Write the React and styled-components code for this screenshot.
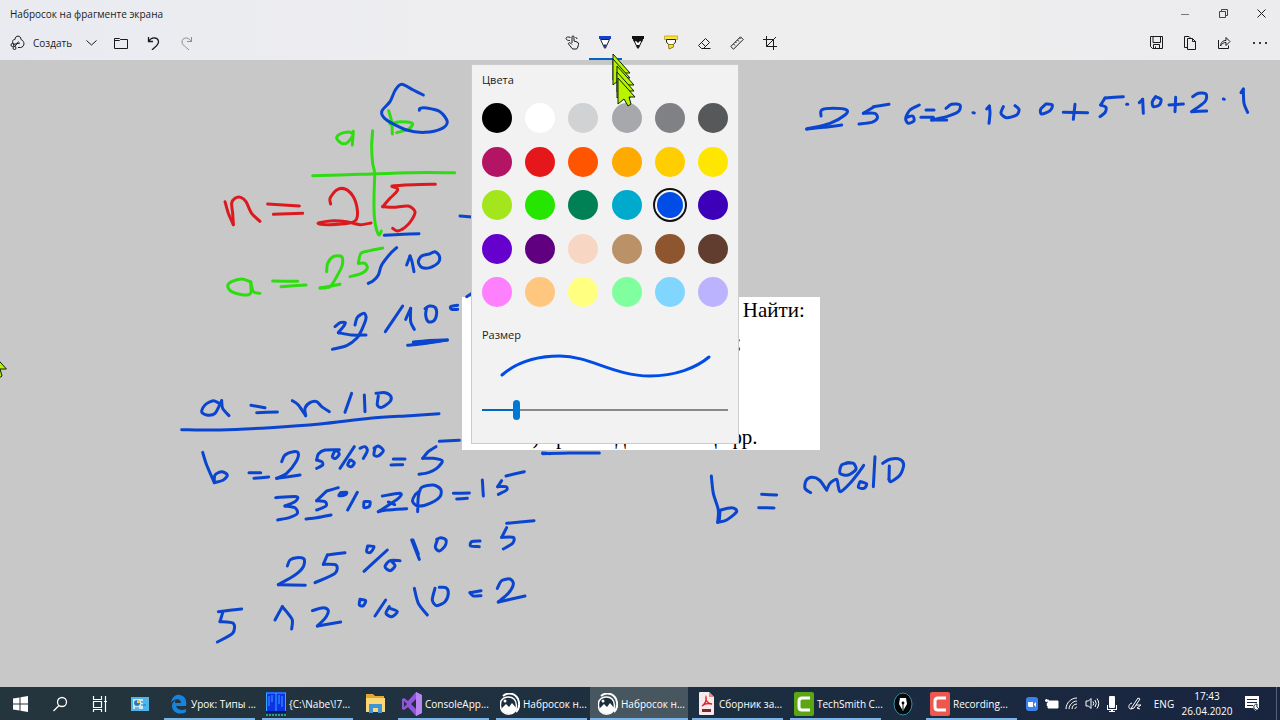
import { useState } from "react";
import styled, { createGlobalStyle, css } from "styled-components";

const GlobalStyle = createGlobalStyle`
  * { box-sizing: border-box; }
  body {
    margin: 0;
    font-family: "Open Sans", "Noto Sans", sans-serif;
    font-size: 10px;
    color: #1b1b1b;
  }
  button {
    margin: 0;
    padding: 0;
    border: 0;
    background: none;
    font: inherit;
    color: inherit;
  }
  svg { display: block; flex: none; }
`;

const Screen = styled.div`
  display: flex;
  flex-direction: column;
  height: 100vh;
  overflow: hidden;
`;

/* ---------- window header ---------- */

const Header = styled.header`
  position: relative;
  z-index: 2;
  background: linear-gradient(90deg, #e9ebf0, #ededf0 30%, #eeeeee 60%, #ececee);
`;

const TitleBar = styled.div`
  display: flex;
  justify-content: space-between;
  align-items: center;
  height: 27px;
  padding-left: 10px;
`;

const Title = styled.h1`
  margin: 0;
  font-size: 10px;
  font-weight: 400;
`;

const WindowButtons = styled.div`
  display: flex;
`;

const WindowButton = styled.button`
  display: flex;
  justify-content: center;
  align-items: center;
  width: 38px;
  height: 27px;
`;

const Toolbar = styled.div`
  display: flex;
  justify-content: space-between;
  height: 33px;
  padding-right: 2px;
`;

const ToolGroup = styled.div`
  display: flex;
`;

const ToolButton = styled.button`
  display: flex;
  justify-content: center;
  align-items: center;
  width: ${({ $width }) => $width || 33}px;
  height: 33px;
  border-bottom: 2px solid ${({ $active }) => ($active ? "#0067c0" : "transparent")};
  opacity: ${({ disabled }) => (disabled ? 0.45 : 1)};
`;

const NewButton = styled.button`
  display: flex;
  align-items: center;
  gap: 8px;
  height: 33px;
  width: 78px;
  padding-left: 10px;
  border-bottom: 2px solid transparent;
`;

const PenSlot = styled.div`
  position: relative;
`;

/* ---------- pen flyout ---------- */

const Flyout = styled.section`
  position: absolute;
  top: 37px;
  left: 50%;
  transform: translateX(-50%);
  width: 268px;
  height: 380px;
  padding: 7px 10px;
  background: #f2f2f2;
  border: 1px solid #cccccc;
`;

const FlyoutTitle = styled.h2`
  margin: 0;
  font-size: 11px;
  line-height: 16px;
  font-weight: 400;
`;

const Palette = styled.div`
  display: grid;
  grid-template-columns: repeat(6, 30px);
  justify-content: space-between;
  align-content: space-between;
  height: 204px;
  margin: 15px 0 20px;
`;

const Swatch = styled.button`
  width: 30px;
  height: 30px;
  border-radius: 50%;
  background: ${({ $color }) => $color};
  ${({ $selected }) =>
    $selected &&
    css`
      border: 2px solid #f6f6f6;
      box-shadow: 0 0 0 2px #111111;
    `}
`;

const Preview = styled.svg`
  width: 100%;
  height: 48px;
  margin: 7px 0 2px;
`;

const SizeSlider = styled.input`
  display: block;
  appearance: none;
  width: 100%;
  height: 20px;
  margin: 0;
  background: transparent;

  &::-webkit-slider-runnable-track {
    height: 2px;
    background: linear-gradient(90deg, #0067c0 ${({ value }) => value}%, #8a8a8a ${({ value }) => value}%);
  }
  &::-webkit-slider-thumb {
    appearance: none;
    width: 7px;
    height: 20px;
    margin-top: -9px;
    border-radius: 4px;
    background: #0078d7;
  }
`;

const Cursors = styled.svg`
  position: absolute;
  top: 24px;
  left: 21px;
  pointer-events: none;
`;

/* ---------- drawing surface ---------- */

const Canvas = styled.main`
  position: relative;
  flex: 1;
  overflow: hidden;
  background: #c8c8c8;
`;

const Fragment = styled.article`
  position: absolute;
  left: 462px;
  top: 237px;
  display: flex;
  flex-direction: column;
  justify-content: space-between;
  width: 358px;
  height: 153px;
  padding-left: 62px;
  background: #ffffff;
  color: #000000;
  font-family: "Liberation Serif", serif;
  font-size: 21px;
  line-height: 26px;
  white-space: nowrap;

  p { margin: 0; }
`;

const Ink = styled.svg`
  position: absolute;
  left: 0;
  top: 0;
  fill: none;
  stroke-linecap: round;
  stroke-linejoin: round;
`;

/* ---------- taskbar ---------- */

const Taskbar = styled.footer`
  display: flex;
  justify-content: space-between;
  height: 33px;
  background: linear-gradient(90deg, #25353d, #1f3140 40%, #1b2b40 70%, #19243f);
  color: #ffffff;
`;

const TaskGroup = styled.div`
  display: flex;
`;

const Task = styled.button`
  position: relative;
  display: flex;
  align-items: center;
  gap: 3px;
  width: 98px;
  padding-left: 8px;
  text-align: left;
  background: ${({ $active }) => ($active ? "#47565f" : "transparent")};

  &::after {
    content: "";
    position: absolute;
    left: ${({ $active }) => ($active ? "0" : "4px")};
    right: ${({ $active }) => ($active ? "0" : "3px")};
    bottom: 0;
    height: 2px;
    background: #7db4e8;
  }
`;

const TaskPicture = styled.span`
  display: flex;
  justify-content: center;
  width: 20px;
`;

const TaskLabel = styled.span`
  white-space: nowrap;
`;

const TaskIcon = styled.button`
  display: flex;
  justify-content: center;
  align-items: center;
  width: ${({ $narrow }) => ($narrow ? "38px" : "40px")};
`;

const Tray = styled.div`
  display: flex;
  align-items: center;
  padding-right: 3px;
`;

const TrayButton = styled.button`
  display: flex;
  justify-content: center;
  align-items: center;
  width: ${({ $width }) => $width || 20}px;
  height: 33px;
`;

const Clock = styled.time`
  width: 54px;
  text-align: center;
  line-height: 15px;
`;

const Notifications = styled(TrayButton)`
  padding-right: 6px;
  border-right: 1px solid #55617a;
`;

/* ---------- data ---------- */

const COLORS = [
  "#000000", "#ffffff", "#d1d2d4", "#a7a8ab", "#808184", "#57585a",
  "#b31564", "#e6171b", "#ff5500", "#ffaa00", "#ffce00", "#ffe600",
  "#a2e61b", "#26e600", "#008055", "#00aacc", "#004de6", "#3d00b8",
  "#6600cc", "#600080", "#f7d7c4", "#bb9167", "#8e562e", "#613d30",
  "#ff80ff", "#ffc680", "#ffff80", "#80ff9e", "#80d6ff", "#bcb3ff",
];

const BLUE = "#0b45cf";
const GREEN = "#2fdc12";
const RED = "#dc1a1e";

// every sheet has its own origin, three units make one pixel
const SHEETS = [
  {
    x: 160, y: 70,
    green: [
      "578,190 565,186 540,192 530,205 545,220 562,218 577,200", "580,184 577,225",
      "686,122 695,155 697,192", "690,162 720,155 757,160 745,178 710,188",
      "638,182 635,230 638,280 644,310 642,380 643,440 650,480 658,495 664,483",
      "458,317 600,313 750,308 884,308",
    ],
    red: [
      "195,395 205,430 220,464", "220,464 218,430 215,400 225,385 242,382 258,395 275,430 300,454",
      "323,402 418,408", "340,433 428,430",
      "512,402 510,385 530,360 555,357 580,380 592,420 588,450 565,460 510,464 478,462 478,458 520,452 560,455 600,464 633,459",
      "826,343 760,344 697,348 712,355 710,365 690,385 668,410", "668,410 700,412 745,408 765,425 755,450 735,472 712,483 698,475",
    ],
    blue: [
      "790,75 760,60 725,43 706,60 690,95 665,125 680,150 740,180 795,187 845,176 862,155 840,125 800,114 780,115 778,121",
      "673,496 730,493 777,491", "900,438 936,441",
    ],
  },
  {
    x: 160, y: 230,
    green: [
      "270,155 245,147 215,155 203,168 215,185 250,195 272,190 272,155 280,185 300,190",
      "338,153 413,154", "363,170 438,165",
      "500,125 503,100 520,80 545,80 547,105 530,140 510,170 480,174", "480,174 540,163",
      "668,54 630,62 603,70 595,100", "595,100 615,100 622,115 605,130 570,140",
    ],
    blue: [
      "710,53 690,72 665,105 655,135 640,152 625,160",
      "740,105 750,78", "750,78 756,95 762,125",
      "808,72 785,78 775,95 785,112 810,113 835,98 838,78 825,65 808,72",
      "525,290 540,278 556,278 550,290 535,308", "535,308 575,315 618,315",
      "585,285 592,262 612,250 618,265 605,300 590,325 560,347 517,358",
      "728,228 676,305", "737,268 752,235", "752,235 752,275 763,298",
      "800,232 797,255 805,275 822,272 830,250 825,232 808,228 795,236",
      "893,226 872,230 875,238 893,238",
      "743,346 800,340 862,330", "760,336 800,332 862,330", "760,340 840,333",
      "920,200 936,190",
    ],
  },
  {
    x: 170, y: 380,
    blue: [
      "150,72 130,62 105,75 95,95 110,105 135,100 155,62", "155,62 158,85 177,107",
      "243,76 285,83", "260,98 322,96",
      "367,62 385,75 407,107", "407,107 405,85 420,68 440,65 455,80 478,95",
      "545,40 525,97", "583,45 585,95", "625,48 622,75 635,82 660,65 662,48 645,38 618,40",
      "35,149 150,150 300,143 450,132 600,115 720,107 807,101",
      "98,217 110,255 133,308", "133,308 135,285 155,275 172,285 160,300 133,308",
      "237,278 272,278", "252,295 296,291",
      "335,245 345,225 370,215 385,220 378,245 350,280 320,295", "320,295 390,285",
      "508,209 465,210 445,222 440,240", "440,240 455,245 458,255 440,265",
      "495,212 487,230 497,235 508,222 500,212", "553,200 510,265", "540,240 533,255 545,260 553,248 543,240",
      "570,205 585,200 592,212 580,235", "615,205 612,225 625,228 640,212 625,198 612,205",
      "670,237 705,237", "663,255 698,254",
      "868,181 808,184", "798,200 775,215 758,235", "758,235 790,235 817,243 800,265 775,278 747,283",
      "317,353 380,350 375,365 345,378", "345,378 375,383 382,400 360,412 323,420",
      "505,323 470,333", "468,335 440,362", "440,362 465,365 468,378 440,390", "408,417 440,413 483,405",
      "512,338 507,347 525,345 530,337 512,338", "562,337 533,390", "582,365 582,382 597,380 600,365 582,365",
      "637,348 690,340 685,355 625,395", "625,395 650,390 710,386", "655,366 674,374",
      "750,332 735,345 728,365 745,378 780,370 810,350 812,328 790,315 755,322 745,350 743,395",
    ],
  },
  {
    x: 200, y: 460,
    blue: [
      "760,100 808,99", "770,117 802,115", "847,60 850,108",
      "973,35 918,48", "905,62 893,80", "893,80 918,80 920,90 895,103",
      "262,318 270,300 290,293 312,297 310,320 285,345 235,374", "235,374 316,376",
      "435,278 382,285", "382,285 370,313", "370,313 408,315 405,340 345,368",
      "503,258 500,275 512,277 522,260 503,258", "562,270 492,334", "600,302 570,302 555,320 570,332 585,318 575,304",
      "635,240 658,298", "639,240 655,282",
      "712,240 706,262 718,273 735,258 738,240 722,233 710,238",
      "840,243 815,245 812,258 838,260",
      "1002,182 920,190", "920,203 905,232", "905,232 940,232 938,250 910,267",
      "125,447 55,455", "68,458 60,485", "60,485 100,490 98,520 52,546",
      "225,480 247,440", "247,440 262,458 277,480 275,507",
      "337,452 370,443 385,452 375,475 352,498", "352,498 422,486",
      "480,418 478,435 490,437 497,422 480,418", "557,420 525,468", "568,440 558,460 575,470 592,455 570,445",
      "643,385 655,430 682,465", "705,385 697,420 710,437 735,425 745,400 738,383 718,382",
      "843,392 810,398", "810,398 820,408 843,407",
      "892,385 905,362 930,357 940,372 925,400 895,426", "895,426 975,408",
    ],
  },
  {
    x: 790, y: 80,
    blue: [
      "93,108 95,90 130,85 170,90 165,105 120,130 50,147", "50,147 100,142 155,135",
      "297,73 250,80", "250,82 220,100", "220,100 255,100 262,115 245,127 207,132",
      "388,75 360,90 347,115 355,130 372,122 368,108 350,112",
      "408,90 432,90", "393,112 430,112",
      "468,85 485,73 510,75 505,95 470,110 425,120", "425,120 470,120",
      "549,98 553,99", "590,87 598,78", "598,78 600,100 597,130",
      "640,80 633,100 650,113 680,105 687,88 675,77",
      "768,72 752,88 755,102 780,92 787,75 768,72",
      "820,97 893,98", "855,73 850,118",
      "1000,50 945,54", "945,54 932,75", "932,75 948,82 945,98 930,110", "1010,73 1013,73",
      "1048,68 1058,58", "1058,58 1060,100", "1097,50 1087,65 1090,80 1108,75 1113,58 1097,50",
      "1137,75 1180,72", "1157,52 1155,95",
      "1208,50 1225,40 1248,42 1245,65 1205,95", "1205,95 1250,93",
      "1300,57 1303,58", "1353,38 1360,27", "1360,27 1362,70 1373,97",
    ],
  },
  {
    x: 690, y: 440,
    blue: [
      "64,108 70,160 85,210 83,247", "83,247 110,240 140,215 125,203 85,212", "90,215 88,240",
      "215,163 260,165", "206,203 252,204",
      "362,158 345,145 348,122 365,112 388,120 410,150", "410,150 420,130 440,118 445,140 452,155 480,130 508,95 521,76",
      "478,68 455,75 450,100 475,105 498,88 490,70 470,68",
      "510,125 505,142 522,145 530,132 512,125", "555,50 550,140",
      "598,78 597,118", "597,118 603,125 630,105 641,75 630,58 600,58 578,70",
    ],
  },
  { x: 460, y: 290, blue: ["248,491 330,489 418,489", "248,489 270,491"] },
];

function toPath(stroke) {
  const points = stroke.split(" ").map((pair) => pair.split(",").map(Number));
  let d = `M${points[0]}`;
  for (let i = 0; i < points.length - 1; i++) {
    const before = points[i - 1] || points[i];
    const from = points[i];
    const to = points[i + 1];
    const after = points[i + 2] || to;
    const c1 = from.map((v, k) => v + (to[k] - before[k]) / 7);
    const c2 = to.map((v, k) => v - (after[k] - from[k]) / 7);
    d += `C${c1} ${c2} ${to}`;
  }
  return d;
}

function Strokes({ list = [], color }) {
  return (
    <g stroke={color} strokeWidth="9">
      {list.map((stroke) => <path key={stroke} d={toPath(stroke)} />)}
    </g>
  );
}

/* ---------- icons ---------- */

function Line({ size = 14, width = 1, children, ...rest }) {
  return (
    <svg width={size} height={size} viewBox={`0 0 ${size} ${size}`} fill="none" stroke="currentColor" strokeWidth={width} {...rest}>
      {children}
    </svg>
  );
}

const Arrow = ({ x, y }) => (
  <path transform={`translate(${x} ${y})`} d="M0 0V26L6 21L10 28L13 26L11 19H17Z" fill="#b8f400" stroke="#10200a" />
);

const SnipLogo = () => (
  <svg width="20" height="22" viewBox="0 0 20 22">
    <path d="M3 3C8 -1 15 0 18 6C20 11 19 16 16 19" fill="none" stroke="#fff" strokeWidth="2" />
    <path d="M1 8C4 3 11 3 14 6C17 9 17 15 15 18C12 22 6 22 3 19C0 16 0 12 1 8Z" fill="#1d2d3a" stroke="#fff" strokeWidth="1.5" />
    <path d="M1 16L6 11L9 14L12 10L17 16C14 22 5 23 1 16Z" fill="#fff" />
    <circle cx="5" cy="8" r="1.5" fill="#fff" />
  </svg>
);

const TechSmith = ({ color }) => (
  <svg width="20" height="24" viewBox="0 0 20 24">
    <rect y="0" width="20" height="24" rx="2" fill={color} />
    <path d="M16 6H8Q5 6 5 9V15Q5 18 8 18H16" fill="none" stroke="#fff" strokeWidth="3" />
  </svg>
);

const EdgeLogo = () => (
  <svg width="17" height="20" viewBox="0 0 17 20">
    <path d="M1 9C2 2 7 0 10 1C15 2 17 6 16 12H6C7 16 12 17 16 15V18C9 22 2 18 2 12C2 9 4 7 6 6C5 7 5 8 5 9H11C11 4 4 4 1 9Z" fill="#1683dc" />
  </svg>
);

const ConsoleLogo = () => (
  <svg width="20" height="24" viewBox="0 0 20 24">
    <rect width="20" height="21" fill="#0d33e6" />
    <path d="M0 1H20M.5 1V20M10 1V20M19.5 1V20M3 4V14M6 3V10M13 3V12M16 4V15" stroke="#37a7ff" fill="none" />
    <path d="M0 20H20" stroke="#071b60" strokeWidth="2" />
    <path d="M0 23H20" stroke="#28a08c" strokeWidth="2" strokeDasharray="2 1" />
  </svg>
);

const StudioLogo = () => (
  <svg width="20" height="24" viewBox="0 0 20 24">
    <path d="M14 0L20 3V21L14 24L6 15L2 18L0 17V7L2 6L6 9ZM14 7L9 12L14 17ZM2 9V15L5 12Z" fill="#9355dc" fillRule="evenodd" />
    <path d="M14 0L20 3V21L14 24Z" fill="#b885f0" />
  </svg>
);

const PdfLogo = () => (
  <svg width="15" height="23" viewBox="0 0 15 23">
    <path d="M1 0H10L15 5V22Q15 23 14 23H1Q0 23 0 22V1Q0 0 1 0Z" fill="#f7eaea" />
    <path d="M10 0V5H15" fill="#e08a8a" />
    <path d="M3 14C6 12 8 8 7 5C6 8 9 12 13 12C9 11 5 12 3 14Z" fill="none" stroke="#d8232a" strokeWidth="1.3" />
    <rect x="3" y="17" width="9" height="3" fill="#7d2a2e" />
  </svg>
);

const ExplorerLogo = () => (
  <svg width="19" height="19" viewBox="0 0 19 19">
    <path d="M0 0H7L9 2H18V17H0Z" fill="#e3a92c" />
    <path d="M0 4H19V18H0Z" fill="#fbd777" />
    <path d="M3 10H16V19H12V14H7V19H3Z" fill="#3f94d4" />
  </svg>
);

const NibLogo = () => (
  <svg width="20" height="24" viewBox="0 0 20 24">
    <ellipse cx="10" cy="12" rx="9" ry="11" fill="#03080c" stroke="#3a8ca0" />
    <path d="M10 19L6 12L7 6H13L14 12Z" fill="#fff" />
    <path d="M10 18V11" stroke="#03080c" />
    <circle cx="10" cy="11" r="1.4" fill="#03080c" />
  </svg>
);

const TASKS = [
  { label: "Урок: Типы ...", icon: <EdgeLogo /> },
  { label: "{C:\\Nabe\\!7...", icon: <ConsoleLogo /> },
  { name: "Проводник", icon: <ExplorerLogo /> },
  { label: "ConsoleApp...", icon: <StudioLogo /> },
  { label: "Набросок н...", icon: <SnipLogo /> },
  { label: "Набросок н...", icon: <SnipLogo />, active: true },
  { label: "Сборник за...", icon: <PdfLogo /> },
  { label: "TechSmith C...", icon: <TechSmith color="#5ba612" /> },
  { name: "Перо", icon: <NibLogo /> },
  { label: "Recording...", icon: <TechSmith color="#ee574e" /> },
];

/* ---------- parts ---------- */

function PenFlyout() {
  const [color, setColor] = useState("#004de6");
  const [size, setSize] = useState(13);

  return (
    <Flyout>
      <FlyoutTitle>Цвета</FlyoutTitle>
      <Palette>
        {COLORS.map((item) => (
          <Swatch
            key={item}
            type="button"
            aria-label={item}
            aria-pressed={item === color}
            $color={item}
            $selected={item === color}
            onClick={() => setColor(item)}
          />
        ))}
      </Palette>
      <FlyoutTitle as="label" htmlFor="size">Размер</FlyoutTitle>
      <Preview viewBox="0 0 246 48" fill="none">
        <path d="M20 25C36 11 57 6 78 6C108 6 132 26 168 26C193 26 214 18 227 7" stroke={color} strokeWidth="3" strokeLinecap="round" />
      </Preview>
      <SizeSlider id="size" type="range" min="0" max="100" value={size} onChange={(e) => setSize(Number(e.target.value))} />
    </Flyout>
  );
}

function AppHeader() {
  return (
    <Header>
      <TitleBar>
        <Title>Набросок на фрагменте экрана</Title>
        <WindowButtons>
          <WindowButton aria-label="Свернуть"><Line size={8}><path d="M0 4.5H8" stroke="#777" /></Line></WindowButton>
          <WindowButton aria-label="Восстановить"><Line size={9}><path d="M.5 2.5H6.5V8.5H.5ZM2.5 2.5V.5H8.5V6.5H6.5" stroke="#444" /></Line></WindowButton>
          <WindowButton aria-label="Закрыть"><Line size={9}><path d="M.5 .5L8.5 8.5M8.5 .5L.5 8.5" /></Line></WindowButton>
        </WindowButtons>
      </TitleBar>
      <Toolbar>
        <ToolGroup>
          <NewButton>
            <Line size={15}>
              <path d="M3.500 9C1.500 6 3 4.500 5 4.500C5 0 11 0 11 4.500C15 6 15 12 10.500 12.500H8M3 9.500L10 8M4.500 12L8.500 6.500" />
              <circle cx="2.5" cy="10" r="1.5" /><circle cx="4.5" cy="13" r="1.5" />
            </Line>
            Создать
          </NewButton>
          <ToolButton $width={26} aria-label="Другие варианты"><Line size={11}><path d="M.5 3.5L5.5 8L10.5 3.5" /></Line></ToolButton>
          <ToolButton aria-label="Открыть"><Line><path d="M.5 2.5H5.5L6.5 3.5H13.5V12.5H.5ZM.5 4.500H5.500L6.500 3.500" /></Line></ToolButton>
          <ToolButton aria-label="Отменить"><Line width={1.3}><path d="M1.500 1V5.500H6M1.500 5.500C5 0 11.500 1.500 11.500 6C11.500 9 8 11 5 14" /></Line></ToolButton>
          <ToolButton disabled aria-label="Повторить"><Line><path d="M11.500 1V5.500H7M11.500 5.500C8 0 2 1.500 2 6C2 9 6 11 9 14" /></Line></ToolButton>
        </ToolGroup>

        <ToolGroup>
          <ToolButton aria-label="Рукописный ввод касанием">
            <Line size={15}>
              <path d="M7 8V2C7 .5 9 .5 9 2V6L12 7Q14 7.500 13.500 9.500L12.500 13Q12 14 11 14H8Q7 14 6 12L3.500 9C3 8 4.500 7 5.500 8L7 9.500M5.500 2.500C2 1 0 3 1.500 4.500C2.500 5.500 4 5.500 5 5.500M10.500 2.500Q12 2.500 12 4" />
            </Line>
          </ToolButton>
          <PenSlot>
            <ToolButton $active aria-label="Шариковая ручка">
              <svg width="14" height="15" viewBox="0 0 14 15">
                <path d="M1 1H13V4H1Z" fill="#1741c8" />
                <path d="M2.500 4.500H11.500L7.500 13H6.500Z" fill="#fff" stroke="#222" />
                <path d="M5.500 9.500H8.500L7 14Z" fill="#1c2f9a" />
              </svg>
            </ToolButton>
            <PenFlyout />
            <Cursors width="32" height="56" viewBox="-2 -2 32 56">
              <Arrow x={1} y={1} />
              <Arrow x={1} y={6} />
              <Arrow x={5} y={13} />
              <Arrow x={5} y={19} />
              <Arrow x={6} y={25} />
            </Cursors>
          </PenSlot>
          <ToolButton aria-label="Карандаш">
            <svg width="14" height="15" viewBox="0 0 14 15">
              <path d="M1 1H13V4H1Z" fill="#111" />
              <path d="M2.500 4.500H11.500L7.500 13H6.500Z" fill="#fff" stroke="#111" />
              <path d="M2 4H12L11 7L9 6L7 8L5 6L3 7ZM5.500 10H8.500L7 14Z" fill="#111" />
            </svg>
          </ToolButton>
          <ToolButton aria-label="Маркер">
            <svg width="14" height="15" viewBox="0 0 14 15">
              <path d="M.5 1H13.500V4.500H.5Z" fill="#ffe332" stroke="#b29a22" strokeWidth=".7" />
              <path d="M2.500 4.500H11.500V7L9.500 9.500H4.500L2.500 7Z" fill="#fff" stroke="#222" />
              <path d="M4.500 9.500H9.500V12L5 14Z" fill="#ffe332" stroke="#8d7b20" />
            </svg>
          </ToolButton>
          <ToolButton aria-label="Ластик"><Line><path d="M1.500 9.500L8.500 2.500L12.500 6.500L6.500 12.500H4.500ZM4.500 6.500L8.500 10.500M5 12.500H13.500" /></Line></ToolButton>
          <ToolButton aria-label="Линейка"><Line><path d="M.8 10.500L10.500 .8L13.200 3.500L3.500 13.200ZM3.500 8L5 9.500M5.500 6L6.500 7M7.500 4L9 5.500M9.500 2L10.500 3" /></Line></ToolButton>
          <ToolButton aria-label="Обрезка изображения"><Line><path d="M3.500 0V10.500H14M0 3.500H10.500V14M3.500 10.500L13 1" /></Line></ToolButton>
        </ToolGroup>

        <ToolGroup>
          <ToolButton $width={34} aria-label="Сохранить как"><Line size={13}><path d="M.5 .5H12.500V12.500H2.500L.5 10.500ZM3 .5V6.500H10.500V.5M3.500 12.500V8.500H9.500V12.500M5.500 12V10.500" /></Line></ToolButton>
          <ToolButton $width={34} aria-label="Копировать"><Line><path d="M4.500 11.500H1.500V.5H6L8 2.500M4.500 2.500H9.500L12.500 5.500V13.500H4.500ZM9.500 2.500V5.500H12.500" /></Line></ToolButton>
          <ToolButton $width={34} aria-label="Поделиться"><Line><path d="M1.500 4V12.500H11.500V9.500M3.500 10C4 6 6 4.500 9 4.500V1.500L13 5.500L9 9.500V6.500C6.500 6.500 5 7.500 3.500 10Z" /></Line></ToolButton>
          <ToolButton $width={37} aria-label="Подробнее">
            <svg width="16" height="4" viewBox="0 0 16 4"><circle cx="2" cy="2" r="1" /><circle cx="8" cy="2" r="1" /><circle cx="14" cy="2" r="1" /></svg>
          </ToolButton>
        </ToolGroup>
      </Toolbar>
    </Header>
  );
}

function DrawingArea() {
  return (
    <Canvas>
      <Fragment>
        <p>Дано двузначное число. Найти:</p>
        <p>а) число десятков в нем;</p>
        <p>б) число единиц в нем;</p>
        <p>в) сумму его цифр;</p>
        <p>г) произведение его цифр.</p>
      </Fragment>
      <Ink width="1280" height="627" viewBox="0 60 1280 627">
        {SHEETS.map((sheet) => (
          <g key={`${sheet.x}-${sheet.y}`} transform={`translate(${sheet.x} ${sheet.y}) scale(.33333)`}>
            <Strokes list={sheet.green} color={GREEN} />
            <Strokes list={sheet.red} color={RED} />
            <Strokes list={sheet.blue} color={BLUE} />
          </g>
        ))}
        <Arrow x={-11} y={350} />
      </Ink>
    </Canvas>
  );
}

function WindowsTaskbar() {
  return (
    <Taskbar>
      <TaskGroup>
        <TaskIcon aria-label="Пуск">
          <svg width="15" height="16" viewBox="0 0 15 16" fill="#fff"><path d="M0 2.500L6.500 1.500V7.500H0ZM7.500 1.300L15 0V7.500H7.500ZM0 8.500H6.500V14.500L0 13.500ZM7.500 8.500H15V16L7.500 14.700Z" /></svg>
        </TaskIcon>
        <TaskIcon aria-label="Поиск"><Line size={16} width={1.3}><circle cx="10" cy="6" r="4.500" /><path d="M7 9.500L1.500 15" /></Line></TaskIcon>
        <TaskIcon aria-label="Представление задач"><Line size={16} width={1.2}><path d="M1.500 0V3.500H9.500V0M1.500 5.500H9.500V11.500H1.500ZM1.500 16V13.500H9.500V16M13.500 0V16M12 5.500H15" /></Line></TaskIcon>
        <TaskIcon aria-label="Панель управления">
          <svg width="18" height="16" viewBox="0 0 18 16">
            <path d="M0 1H18V15H0Z" fill="#4fb4ea" /><path d="M2 3H12V13H2Z" fill="#c8ebfa" />
            <circle cx="6" cy="7" r="3" fill="#2b79bd" /><path d="M6 7V4A3 3 0 0 1 9 7Z" fill="#ffc83d" />
            <path d="M10 6H12M10 9H15M4 12H8" stroke="#2378bd" />
          </svg>
        </TaskIcon>
        {TASKS.map((task, index) =>
          task.label ? (
            <Task key={index} $active={task.active}>
              <TaskPicture>{task.icon}</TaskPicture>
              <TaskLabel>{task.label}</TaskLabel>
            </Task>
          ) : (
            <TaskIcon key={index} $narrow aria-label={task.name}>{task.icon}</TaskIcon>
          )
        )}
      </TaskGroup>
      <Tray>
        <TrayButton aria-label="Zoom"><svg width="12" height="14" viewBox="0 0 12 14"><rect width="12" height="14" rx="3" fill="#3b82ee" /><path d="M2 5H7V10H3L2 9ZM8 7L10 5V10L8 8Z" fill="#fff" /></svg></TrayButton>
        <TrayButton aria-label="Батарея"><Line><path d="M3 4H13V11H3Z" fill="#fff" /><path d="M0 3.500H4M1.500 2V5M2.500 6V9" strokeWidth="1.500" /></Line></TrayButton>
        <TrayButton aria-label="Сеть"><Line><path d="M1 12C1 6 6 1 12 1M4 12C4 8 8 4 12 4M7 12C7 9 9 7 12 7M10 12C10 11 11 10 12 10" /></Line></TrayButton>
        <TrayButton aria-label="Громкость"><Line size={15}><path d="M1 5H3.500L6 2.500V12.500L3.500 10H1ZM8 5.500Q9.500 7.500 8 9.500M10 4Q12.500 7.500 10 11M12 2.500Q15.500 7.500 12 12.500" /></Line></TrayButton>
        <TrayButton aria-label="Микрофон"><svg width="10" height="16" viewBox="0 0 10 16" fill="#fff"><rect x="2" width="6" height="12" rx="1" /><path d="M0 9H1V13H9V9H10V14H6V15H8V16H2V15H4V14H0Z" /></svg></TrayButton>
        <TrayButton $width={26} aria-label="Windows Ink"><Line><path d="M4 10L10 1L12 2L6 11L3 12ZM4 6C0 7 0 12 3 12M8 8H13L9 11L12 12" /></Line></TrayButton>
        <TrayButton $width={32}>ENG</TrayButton>
        <Clock>17:43<br />26.04.2020</Clock>
        <Notifications $width={43} aria-label="Уведомления">
          <svg width="15" height="16" viewBox="0 0 15 16"><path d="M0 0H14V12H11V15L8 12H0Z" fill="#fff" /><path d="M2 3.500H12M2 6.500H12M2 9.500H8" stroke="#1a2540" /><path d="M12 8A3 3 0 1 0 14 13A4 4 0 0 1 12 8" fill="#fff" stroke="#1a2540" /></svg>
        </Notifications>
      </Tray>
    </Taskbar>
  );
}

export default function App() {
  return (
    <Screen>
      <GlobalStyle />
      <AppHeader />
      <DrawingArea />
      <WindowsTaskbar />
    </Screen>
  );
}
